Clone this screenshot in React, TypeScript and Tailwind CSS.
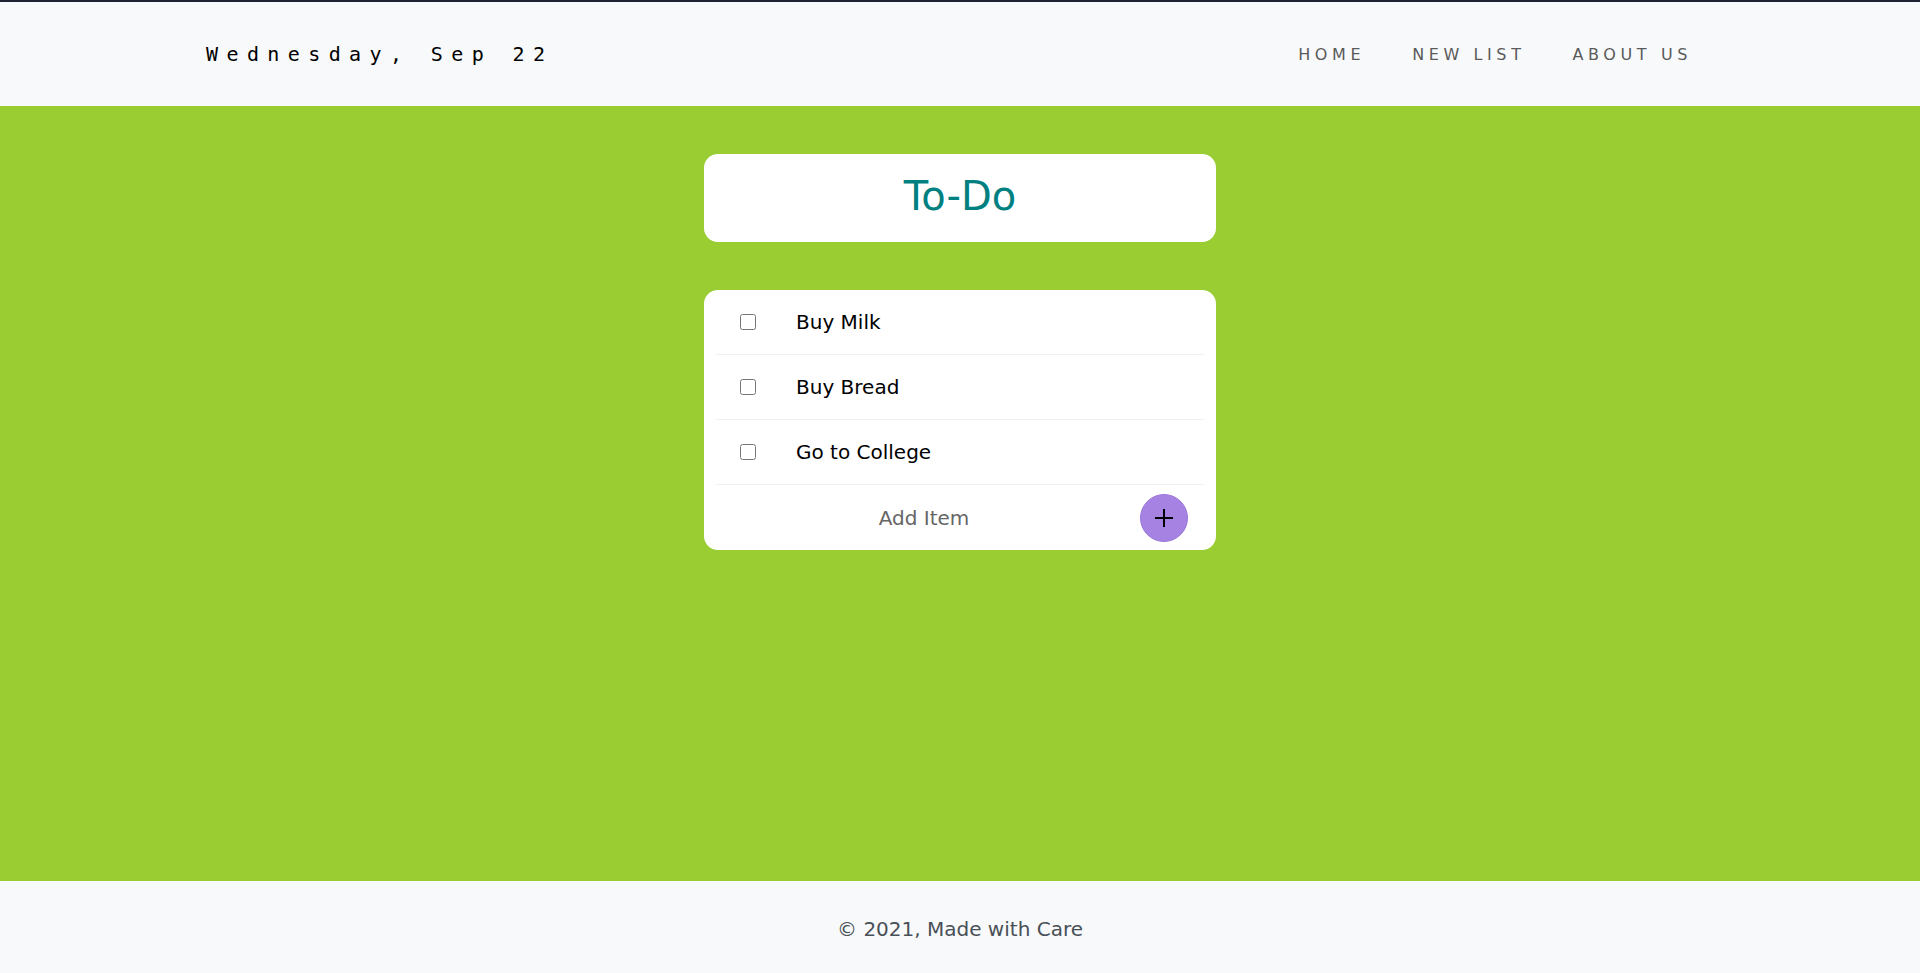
import { useState } from "react";

const initialItems = ["Buy Milk", "Buy Bread", "Go to College"];

const links = ["HOME", "NEW LIST", "ABOUT US"];

export default function App() {
  const [items] = useState(initialItems);

  return (
    <div className="min-h-screen flex flex-col bg-[#9acd32] font-['DejaVu_Sans',sans-serif]">
      <header className="h-[106px] border-t-2 border-[#1f2233] bg-[#f8f9fa] flex items-center justify-between pl-[206px] pr-[228px]">
        <p className="text-[20px] text-black tracking-[8.4px] font-['DejaVu_Sans_Mono',monospace]">
          Wednesday, Sep 22
        </p>
        <nav className="flex items-center gap-[47px] pt-px">
          {links.map((l) => (
            <a key={l} href="#" className="text-[16px] text-[#5a5a5a] tracking-[4.6px] leading-none">
              {l}
            </a>
          ))}
        </nav>
      </header>

      <main className="flex-1 flex flex-col items-center pt-12">
        <div className="w-[512px] h-[88px] bg-white rounded-[14px] flex items-center justify-center mb-12">
          <h1 className="text-[40px] text-[#008080] leading-none pb-[5px]">To-Do</h1>
        </div>

        <div className="w-[512px] bg-white rounded-[14px] px-3">
          {items.map((item) => (
            <div key={item} className="h-[65px] flex items-center border-b border-[#f1f1f1]">
              <input type="checkbox" className="w-4 h-4 ml-6 mr-10" />
              <p className="text-[20px] text-black">{item}</p>
            </div>
          ))}
          <form className="h-[65px] flex items-center" onSubmit={(e) => e.preventDefault()}>
            <input
              type="text"
              placeholder="Add Item"
              className="flex-1 min-w-0 h-full text-center text-[20px] bg-transparent outline-none placeholder:text-[#666]"
            />
            <button
              type="submit"
              className="w-12 h-12 ml-2 mr-4 rounded-full bg-[#a683e3] border border-[#9b78d8] flex items-center justify-center"
            >
              <svg width="20" height="20" viewBox="0 0 20 20">
                <path d="M10 1v18M1 10h18" stroke="black" strokeWidth="2" />
              </svg>
            </button>
          </form>
        </div>
      </main>

      <footer className="h-[92px] bg-[#f8f9fa] flex items-center justify-center pt-[3px]">
        <p className="text-[20px] text-[#495057]">© 2021, Made with Care</p>
      </footer>
    </div>
  );
}
